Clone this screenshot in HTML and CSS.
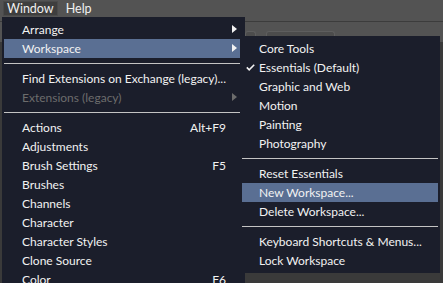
FILE: index.html
```html
<!DOCTYPE html>
<html lang="en">
<head>
  <meta charset="UTF-8">
  <title>Window menu</title>
  <link rel="stylesheet" href="styles.css">
</head>
<body>
  <div class="menubar">
    <span class="top-item active">Window</span>
    <span class="top-item">Help</span>
  </div>
  <div class="options-bar">
    <span class="tool-box small"></span>
    <span class="tool-box wide"></span>
  </div>
  <div class="workarea"></div>

  <div class="menu main-menu">
    <div class="item"><span class="label">Arrange</span><span class="arrow"></span></div>
    <div class="item hover"><span class="label">Workspace</span><span class="arrow"></span></div>
    <div class="sep"></div>
    <div class="item"><span class="label">Find Extensions on Exchange (legacy)...</span><span class="arrow none"></span></div>
    <div class="item disabled"><span class="label">Extensions (legacy)</span><span class="arrow"></span></div>
    <div class="sep"></div>
    <div class="item"><span class="label">Actions</span><span class="key">Alt+F9</span><span class="arrow none"></span></div>
    <div class="item"><span class="label">Adjustments</span><span class="arrow none"></span></div>
    <div class="item"><span class="label">Brush Settings</span><span class="key">F5</span><span class="arrow none"></span></div>
    <div class="item"><span class="label">Brushes</span><span class="arrow none"></span></div>
    <div class="item"><span class="label">Channels</span><span class="arrow none"></span></div>
    <div class="item"><span class="label">Character</span><span class="arrow none"></span></div>
    <div class="item"><span class="label">Character Styles</span><span class="arrow none"></span></div>
    <div class="item"><span class="label">Clone Source</span><span class="arrow none"></span></div>
    <div class="item"><span class="label">Color</span><span class="key">F6</span><span class="arrow none"></span></div>
  </div>

  <div class="menu sub-menu">
    <div class="item"><span class="check"></span><span class="label">Core Tools</span></div>
    <div class="item"><span class="check">
      <svg width="9" height="7" viewBox="0 0 9 7"><path d="M0.8 3.4 L3.2 5.8 L8.2 0.8" fill="none" stroke="#f2f2f2" stroke-width="1.6"/></svg>
    </span><span class="label">Essentials (Default)</span></div>
    <div class="item"><span class="check"></span><span class="label">Graphic and Web</span></div>
    <div class="item"><span class="check"></span><span class="label">Motion</span></div>
    <div class="item"><span class="check"></span><span class="label">Painting</span></div>
    <div class="item"><span class="check"></span><span class="label">Photography</span></div>
    <div class="sep"></div>
    <div class="item"><span class="check"></span><span class="label">Reset Essentials</span></div>
    <div class="item hover"><span class="check"></span><span class="label">New Workspace...</span></div>
    <div class="item"><span class="check"></span><span class="label">Delete Workspace...</span></div>
    <div class="sep"></div>
    <div class="item"><span class="check"></span><span class="label">Keyboard Shortcuts &amp; Menus...</span></div>
    <div class="item"><span class="check"></span><span class="label">Lock Workspace</span></div>
  </div>
</body>
</html>
```

FILE: styles.css
```css
body {
  margin: 0;
  width: 443px;
  height: 283px;
  overflow: hidden;
  position: relative;
  background: #3a3a3a;
  font-family: 'Lato', 'Liberation Sans', sans-serif;
  font-size: 12px;
  color: #f2f2f2;
}
.menubar {
  height: 22px;
  background: #535353;
  border-bottom: 1px solid #3c3c3c;
  display: flex;
  align-items: flex-start;
  padding: 1px 0 0 3px;
  box-sizing: border-box;
}
.top-item {
  height: 15px;
  line-height: 15px;
  padding: 0 4px;
  margin-right: 4px;
  font-size: 12.5px;
  color: #f0f0f0;
}
.top-item.active {
  background: #3e3e3e;
  box-shadow: inset 0 0 0 1px #4a4a4a;
}
.options-bar {
  height: 20px;
  background: #535353;
  display: flex;
  align-items: flex-end;
  gap: 10px;
  padding-left: 245px;
}
.tool-box {
  height: 10px;
  background: #4c4c4c;
  border: 1px solid #5e5e5e;
  border-bottom: none;
  border-radius: 3px 3px 0 0;
}
.tool-box.small { width: 9px; }
.tool-box.wide { width: 67px; }
.workarea {
  height: 240px;
  background: #3a3a3a;
}
.menu {
  position: absolute;
  background: #1b1e2b;
  padding: 3px 2px;
}
.main-menu {
  left: 2px;
  top: 17px;
  width: 239px;
  height: 280px;
}
.sub-menu {
  left: 240px;
  top: 36px;
  width: 196px;
}
.item {
  height: 19px;
  line-height: 19px;
  display: flex;
  align-items: center;
  white-space: nowrap;
}
.main-menu .item {
  padding-left: 18px;
}
.item.hover {
  background: #5a6f93;
}
.item.disabled {
  color: #6c6c6c;
}
.label {
  flex: 1;
}
.key {
  margin-left: 10px;
}
.arrow {
  width: 17px;
  height: 19px;
  position: relative;
  flex-shrink: 0;
}
.arrow::after {
  content: "";
  position: absolute;
  left: 6px;
  top: 5px;
  border-left: 5px solid #f2f2f2;
  border-top: 4px solid transparent;
  border-bottom: 4px solid transparent;
}
.disabled .arrow::after {
  border-left-color: #6c6c6c;
}
.arrow.none::after {
  display: none;
}
.check {
  width: 17px;
  height: 19px;
  display: flex;
  align-items: center;
  justify-content: center;
  flex-shrink: 0;
}
.sep {
  height: 11px;
  position: relative;
}
.sep::after {
  content: "";
  position: absolute;
  left: 0;
  right: 0;
  top: 5px;
  height: 1px;
  background: #c4c4c4;
}
```
